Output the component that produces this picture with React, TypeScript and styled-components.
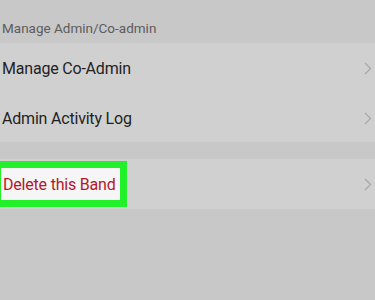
import React from "react";
import styled, { createGlobalStyle } from "styled-components";

const Global = createGlobalStyle`
  html, body { margin: 0; padding: 0; background: #c8c8c8; }
  body { font-family: Roboto, "Noto Sans", sans-serif; }
`;

const Page = styled.div`
  width: 375px;
  height: 300px;
  background: #c8c8c8;
  overflow: hidden;
`;

const SectionHeader = styled.div`
  height: 43px;
  box-sizing: border-box;
  padding: 0 0 7px 2px;
  display: flex;
  align-items: flex-end;
  font-size: 13.5px;
  color: #5c5c5c;
`;

const Group = styled.div`
  background: #d0d0d0;
`;

const Row = styled.div<{ $h: number }>`
  height: ${(p) => p.$h}px;
  display: flex;
  align-items: center;
  justify-content: space-between;
  padding-right: 3px;
`;

const Label = styled.span<{ $danger?: boolean }>`
  font-size: 16px;
  letter-spacing: -0.2px;
  white-space: nowrap;
  color: ${(p) => (p.$danger ? "#b3162c" : "#1f1f1f")};
  padding-left: 2px;
`;

const Highlight = styled.div`
  border: 7px solid #22f02a;
  border-left-width: 1px;
  background: #f6f6f6;
  height: 46px;
  box-sizing: border-box;
  width: 127px;
  display: flex;
  align-items: center;
`;

const Gap = styled.div`
  height: 17px;
`;

const Chevron = () => (
  <svg width="8" height="13" viewBox="0 0 8 13">
    <path d="M1 1l5.5 5.5L1 12" fill="none" stroke="#a9a9a9" strokeWidth="1.3" />
  </svg>
);

export default function App() {
  return (
    <Page>
      <Global />
      <SectionHeader>Manage Admin/Co-admin</SectionHeader>
      <Group>
        <Row $h={51}>
          <Label>Manage Co-Admin</Label>
          <Chevron />
        </Row>
        <Row $h={48}>
          <Label>Admin Activity Log</Label>
          <Chevron />
        </Row>
      </Group>
      <Gap />
      <Group>
        <Row $h={50}>
          <Highlight>
            <Label $danger>Delete this Band</Label>
          </Highlight>
          <Chevron />
        </Row>
      </Group>
    </Page>
  );
}
